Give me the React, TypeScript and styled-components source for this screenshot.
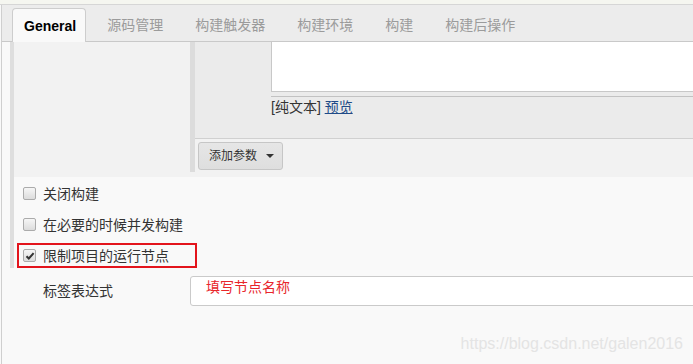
import React from "react";
import styled, { createGlobalStyle } from "styled-components";

const GlobalStyle = createGlobalStyle`
  html, body { margin: 0; padding: 0; background: #f9f9f9; }
  body {
    font-family: "Liberation Sans", "Noto Sans CJK SC", sans-serif;
    overflow: hidden;
  }
`;

const Page = styled.div`
  position: relative;
  width: 693px;
  height: 364px;
  overflow: hidden;
  background: #f9f9f9;
`;

const TopStrip = styled.div`
  height: 4px;
  background: #f5f6f0;
  border-bottom: 1px solid #d6d6d6;
`;

const Frame = styled.div`
  width: 760px;
  height: 359px;
  margin-left: 1px;
  border-left: 1px solid #cfcfcf;
`;

const TabBar = styled.div`
  display: flex;
  align-items: flex-end;
  height: 36px;
  padding-left: 10px;
  background: #ececec;
  border-bottom: 1px solid #c9c9c9;
`;

const Tab = styled.div<{ $active?: boolean }>`
  box-sizing: border-box;
  display: flex;
  align-items: center;
  height: 33px;
  padding: 0 11px;
  margin-right: 10px;
  font-size: 14px;
  line-height: 16px;
  color: #9b9b9b;
  ${(p) =>
    p.$active &&
    `
    height: 34px;
    padding: 0 9px 0 11px;
    margin-bottom: -1px;
    color: #000;
    font-weight: 700;
    background: #f9f9f9;
    border: 1px solid #cdcdcd;
    border-bottom: none;
    border-radius: 4px 4px 0 0;
  `}
`;

const Nested = styled.div`
  margin-left: 8px;
  border-left: 4px solid #dedede;
`;

const ParamSection = styled.div`
  display: flex;
  padding-bottom: 5px;
  background: #f2f2f2;
`;

const NameColumn = styled.div`
  width: 176px;
  flex: none;
`;

const ParamColumn = styled.div`
  flex: 1;
  padding-bottom: 2px;
  border-left: 5px solid #dcdcdc;
`;

const ParamPanel = styled.div`
  display: flex;
  height: 96px;
  padding-left: 76px;
  background: #ebebeb;
  border-bottom: 1px solid #d0d0d0;
`;

const Editor = styled.div`
  flex: 1;
  display: flex;
  flex-direction: column;
`;

const TextArea = styled.div`
  height: 49px;
  background: #fff;
  border: 1px solid #c8c8c8;
  border-top: none;
`;

const Grip = styled.div`
  height: 4px;
  border-bottom: 1px solid #c2c2c2;
`;

const EditorLinks = styled.div`
  margin-top: 2px;
  font-size: 14px;
  line-height: 16px;
  color: #333;
`;

const PreviewLink = styled.a`
  color: #204a87;
  text-decoration: underline;
`;

const ButtonRow = styled.div`
  padding: 3px 0 0 3px;
`;

const DropButton = styled.div`
  box-sizing: border-box;
  display: inline-flex;
  align-items: center;
  width: 85px;
  height: 28px;
  padding-left: 10px;
  font-size: 12px;
  line-height: 14px;
  color: #333;
  background: linear-gradient(#e6e6e6, #dedede);
  border: 1px solid #c6c6c6;
  border-radius: 3px;
`;

const Caret = styled.span`
  margin-left: 9px;
  width: 0;
  height: 0;
  border-left: 4px solid transparent;
  border-right: 4px solid transparent;
  border-top: 4px solid #333;
`;

const OptionList = styled.div`
  display: flex;
  flex-direction: column;
  align-items: flex-start;
  gap: 6px;
  padding-top: 4px;
`;

const OptionRow = styled.label<{ $marked?: boolean }>`
  box-sizing: border-box;
  display: flex;
  align-items: center;
  width: 180px;
  height: 25px;
  margin-left: 3px;
  padding-left: 4px;
  border: 2px solid ${(p) => (p.$marked ? "#e3141c" : "transparent")};
`;

const Box = styled.span`
  box-sizing: border-box;
  display: inline-flex;
  align-items: center;
  justify-content: center;
  flex: none;
  width: 13px;
  height: 13px;
  margin-right: 7px;
  border: 1px solid #ababab;
  border-radius: 2px;
  background: linear-gradient(#f6f6f6, #dcdcdc);
`;

const OptionText = styled.span`
  font-size: 14px;
  line-height: 16px;
  color: #333;
  white-space: nowrap;
`;

const FieldRow = styled.div`
  display: flex;
  align-items: center;
  padding: 8px 0 0 41px;
`;

const FieldLabel = styled.div`
  width: 147px;
  flex: none;
  font-size: 14px;
  line-height: 16px;
  color: #333;
`;

const TextField = styled.div`
  box-sizing: border-box;
  width: 600px;
  height: 30px;
  padding: 0 15px;
  font-size: 14px;
  line-height: 20px;
  color: #e8262b;
  background: #fff;
  border: 1px solid #cacaca;
  border-radius: 3px;
`;

const Watermark = styled.div`
  position: absolute;
  right: 10px;
  top: 335px;
  font-family: "Liberation Sans", sans-serif;
  font-size: 16px;
  line-height: 18px;
  color: #e4e4e4;
`;

function Check({ checked }: { checked?: boolean }) {
  return (
    <Box>
      {checked && (
        <svg width="10" height="10" viewBox="0 0 10 10">
          <polyline
            points="1.5,5.2 3.8,7.5 8.6,2.2"
            fill="none"
            stroke="#333"
            strokeWidth="2"
          />
        </svg>
      )}
    </Box>
  );
}

const tabs = ["General", "源码管理", "构建触发器", "构建环境", "构建", "构建后操作"];

const options = [
  { text: "关闭构建", checked: false, marked: false },
  { text: "在必要的时候并发构建", checked: false, marked: false },
  { text: "限制项目的运行节点", checked: true, marked: true },
];

export default function App() {
  return (
    <Page>
      <GlobalStyle />
      <TopStrip />
      <Frame>
        <TabBar>
          {tabs.map((t, i) => (
            <Tab key={t} $active={i === 0}>
              {t}
            </Tab>
          ))}
        </TabBar>
        <Nested>
          <ParamSection>
            <NameColumn />
            <ParamColumn>
              <ParamPanel>
                <Editor>
                  <TextArea />
                  <Grip />
                  <EditorLinks>
                    [纯文本] <PreviewLink>预览</PreviewLink>
                  </EditorLinks>
                </Editor>
              </ParamPanel>
              <ButtonRow>
                <DropButton>
                  添加参数
                  <Caret />
                </DropButton>
              </ButtonRow>
            </ParamColumn>
          </ParamSection>
          <OptionList>
            {options.map((o) => (
              <OptionRow key={o.text} $marked={o.marked}>
                <Check checked={o.checked} />
                <OptionText>{o.text}</OptionText>
              </OptionRow>
            ))}
          </OptionList>
        </Nested>
        <FieldRow>
          <FieldLabel>标签表达式</FieldLabel>
          <TextField>填写节点名称</TextField>
        </FieldRow>
      </Frame>
      <Watermark>https://blog.csdn.net/galen2016</Watermark>
    </Page>
  );
}
